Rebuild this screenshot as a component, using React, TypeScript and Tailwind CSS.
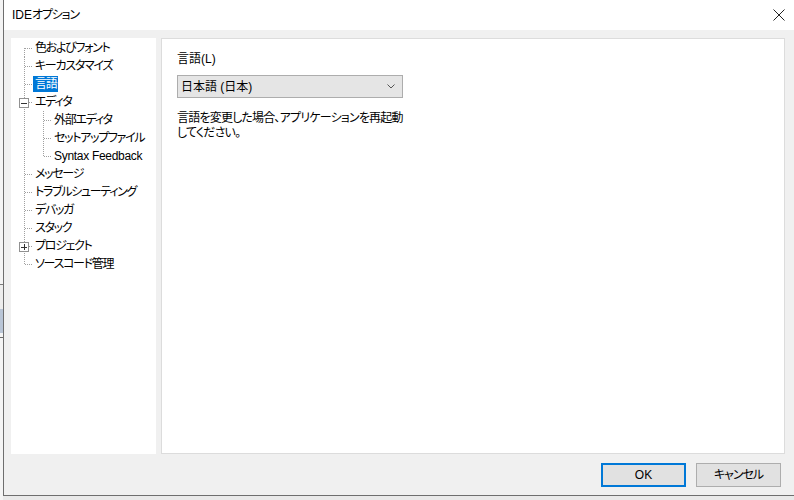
import React from "react";

const FONT = { fontFamily: '"Liberation Sans", "Noto Sans CJK JP", sans-serif' };

type Row = { label: string; level: 0 | 1; box?: "minus" | "plus"; selected?: boolean; first?: boolean; last?: boolean; childLast?: boolean };

const rows: Row[] = [
  { label: "色およびフォント", level: 0, first: true },
  { label: "キーカスタマイズ", level: 0 },
  { label: "言語", level: 0, selected: true },
  { label: "エディタ", level: 0, box: "minus" },
  { label: "外部エディタ", level: 1 },
  { label: "セットアップファイル", level: 1 },
  { label: "Syntax Feedback", level: 1, childLast: true },
  { label: "メッセージ", level: 0 },
  { label: "トラブルシューティング", level: 0 },
  { label: "デバッガ", level: 0 },
  { label: "スタック", level: 0 },
  { label: "プロジェクト", level: 0, box: "plus" },
  { label: "ソースコード管理", level: 0, last: true },
];

const DOT = "#a0a0a0";

function Connector({ r }: { r: Row }) {
  const w = r.level === 0 ? 22 : 41;
  const vTop = r.first ? 9 : 0;
  const vBot = r.last ? 9 : 18;
  return (
    <svg width={w} height={18} className="shrink-0" shapeRendering="crispEdges">
      <line x1={13.5} y1={vTop} x2={13.5} y2={vBot} stroke={DOT} strokeDasharray="1 1" />
      {r.level === 0 && <line x1={14} y1={9.5} x2={22} y2={9.5} stroke={DOT} strokeDasharray="1 1" />}
      {r.level === 1 && (
        <>
          <line x1={32.5} y1={0} x2={32.5} y2={r.childLast ? 10 : 18} stroke={DOT} strokeDasharray="1 1" />
          <line x1={33} y1={9.5} x2={41} y2={9.5} stroke={DOT} strokeDasharray="1 1" />
        </>
      )}
      {r.box && (
        <>
          <rect x={8.5} y={5.5} width={9} height={9} fill="#ffffff" stroke="#919191" />
          <line x1={10} y1={10} x2={16} y2={10} stroke="#333333" />
          {r.box === "plus" && <line x1={13} y1={7} x2={13} y2={13} stroke="#333333" />}
        </>
      )}
    </svg>
  );
}

export default function App() {
  return (
    <div
      className="w-[794px] h-[500px] flex bg-[#e9e9e9] overflow-hidden text-[12px] text-black [font-feature-settings:'palt']"
      style={FONT}
    >
      {/* background window strip */}
      <div className="w-[3px] flex flex-col shrink-0 bg-[#f4f4f4]">
        <div className="h-[284px]" />
        <div className="h-[1px] bg-[#7a7a7a]" />
        <div className="h-[24px] bg-[#ededed]" />
        <div className="h-[24px] bg-[#b9c5d6]" />
        <div className="h-[4px]" />
        <div className="h-[1px] bg-[#6a6a6a]" />
      </div>
      {/* window */}
      <div className="flex flex-col w-[791px] h-[496px] border-l border-b border-[#6e6e6e] bg-[#f0f0f0]">
        <div className="h-[30px] bg-white flex items-center justify-between pl-[8px] pr-[8px] shrink-0">
          <span className="text-[12px] leading-none">
            IDE<span className="tracking-[-1.2px]">オプション</span>
          </span>
          <svg width="12" height="12" viewBox="0 0 12 12" className="mr-[1px]">
            <path d="M0.5 0.5 L11.5 11.5 M11.5 0.5 L0.5 11.5" stroke="#222" strokeWidth="1" />
          </svg>
        </div>
        <div className="flex-1 flex flex-col pl-[7px] pr-[9px] pt-[8px] pb-[6px]">
          <div className="flex gap-[5px] h-[416px]">
            <div className="w-[145px] bg-white flex flex-col overflow-hidden pt-[1px]">
              {rows.map((r) => (
                <div key={r.label} className="flex items-center h-[18px]">
                  <Connector r={r} />
                  <span
                    className={
                      "px-[2px] leading-[16px] whitespace-nowrap " +
                      (r.level === 1 && r.label.startsWith("Syntax") ? "tracking-[-0.3px] " : "tracking-[-1.3px] ") +
                      (r.selected ? "bg-[#0078d7] text-white" : "")
                    }
                  >
                    {r.label}
                  </span>
                </div>
              ))}
            </div>
            <div className="flex-1 bg-white border border-[#dcdcdc] pl-[15px] pt-[13px]">
              <div className="leading-[15px]">言語(L)</div>
              <div className="mt-[8px] w-[226px] h-[23px] bg-[#e5e5e5] border border-[#adadad] flex items-center justify-between pl-[3px] pr-[7px]">
                <span className="leading-none">日本語 (日本)</span>
                <svg width="8" height="5" viewBox="0 0 8 5">
                  <path d="M0.5 0.5 L4 4 L7.5 0.5" fill="none" stroke="#555" strokeWidth="1" />
                </svg>
              </div>
              <div className="mt-[13px] leading-[15px] tracking-[-0.8px]">
                <div>言語を変更した場合、アプリケーションを再起動</div>
                <div>してください。</div>
              </div>
            </div>
          </div>
          <div className="flex justify-end gap-[10px] mt-[9px] pr-[4px]">
            <button className="w-[85px] h-[24px] bg-[#e1e1e1] border-2 border-[#0078d7] leading-none">OK</button>
            <button className="w-[85px] h-[24px] bg-[#e1e1e1] border border-[#adadad] leading-none tracking-[-1px]">キャンセル</button>
          </div>
        </div>
      </div>
    </div>
  );
}
